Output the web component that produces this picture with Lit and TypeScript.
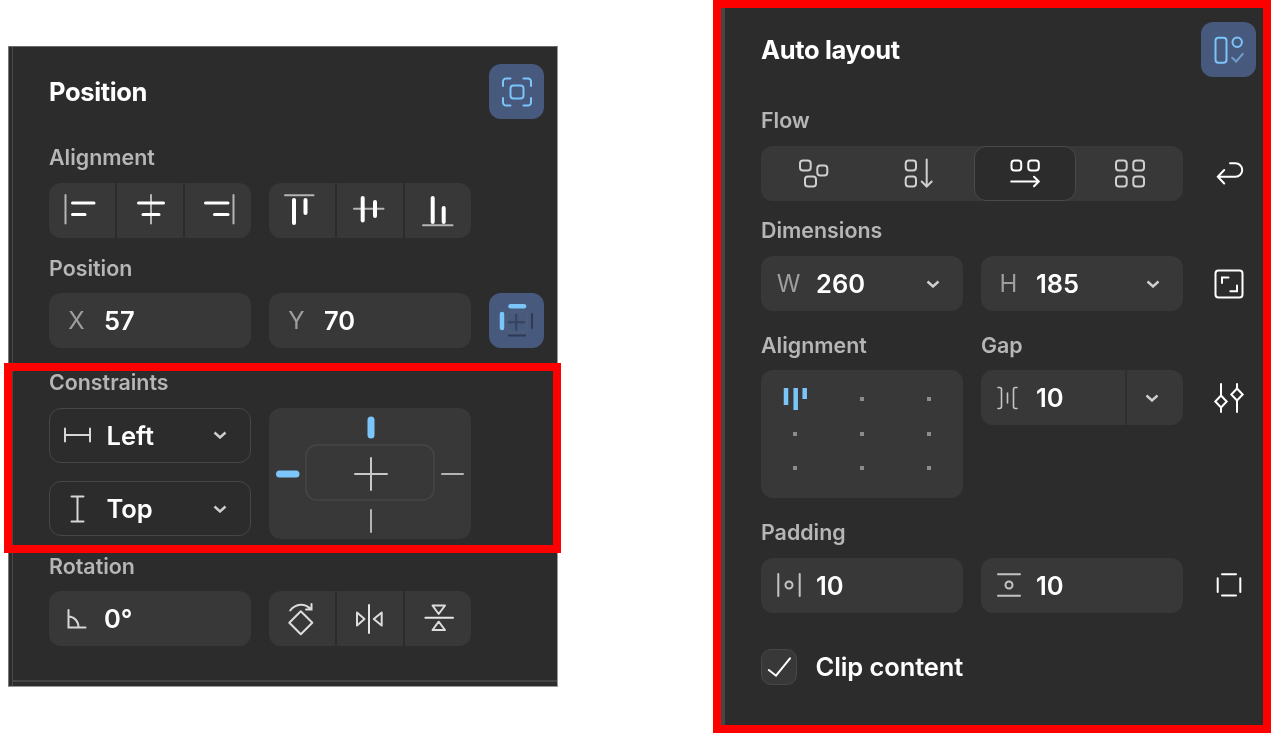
import { LitElement, html, css, svg } from 'lit';
import { customElement } from 'lit/decorators.js';

const BLUE = '#7cc5fa';
const GRAY = '#b4b4b4';

// every icon is drawn around 0,0 so it stays centered in its cell
const ic = (body: unknown) => html`<svg class="ic" viewBox="-20 -20 40 40">${body}</svg>`;

const line = (d: string, w = 2, c = GRAY) => svg`<path d=${d} stroke=${c} stroke-width=${w}></path>`;
const box = (x: number, y: number, w: number, h: number, c = '#cfcfcf', r = 3) =>
  svg`<rect x=${x} y=${y} width=${w} height=${h} rx=${r} stroke=${c}></rect>`;

const icons = {
  alignLeft: ic(svg`${line('M-16.5 -15V13.5')}${line('M-9.5 -7H12', 3, '#fff')}${line('M-9.5 4.5H3', 3, '#fff')}`),
  alignCenter: ic(svg`${line('M1 -15V13.5')}${line('M-11.5 -7H13.5', 3, '#fff')}${line('M-7 4.5H9', 3, '#fff')}`),
  alignRight: ic(svg`${line('M15.5 -15V13.5')}${line('M-12.5 -7H10', 3, '#fff')}${line('M-3.5 4.5H10', 3, '#fff')}`),
  alignTop: ic(svg`${line('M-17 -14.8H11.5')}${line('M-8 -10V13', 4, '#fff')}${line('M3.5 -10V3', 4, '#fff')}`),
  alignMiddle: ic(svg`${line('M-16 -1.2H13.5')}${line('M-7.3 -12V10.5', 4, '#fff')}${line('M5 -8V6', 4, '#fff')}`),
  alignBottom: ic(svg`${line('M-15 15.2H14.5')}${line('M-5.3 -12V12', 4, '#fff')}${line('M5.7 -2V12', 4, '#fff')}`),
  focus: ic(svg`
    ${line('M-14 -6V-10.5A3 3 0 0 1 -11 -13.5H-6.5', 2, BLUE)}
    ${line('M6.5 -13.5H11A3 3 0 0 1 14 -10.5V-6', 2, BLUE)}
    ${line('M14 6V10.5A3 3 0 0 1 11 13.5H6.5', 2, BLUE)}
    ${line('M-6.5 13.5H-11A3 3 0 0 1 -14 10.5V6', 2, BLUE)}
    ${box(-6.5, -6.5, 13, 13, BLUE)}`),
  constraintMini: ic(svg`
    ${box(-10, -9, 20, 20, '#4d5c7b')}
    ${line('M-0.8 -6.5V9M-8.5 1.2H7', 2, '#36425c')}
    ${line('M-6.5 -14.8H7', 4.5, BLUE)}
    ${line('M-15 -7V7', 4.5, BLUE)}
    ${line('M15 -7V7', 2, '#2f3a52')}
    ${line('M-8 14.5H8', 2, '#2f3a52')}`),
  hConstraint: ic(svg`${line('M-11 -6.5V6.5M14 -6.5V6.5M-11 0H14', 2, '#d6d6d6')}`),
  vConstraint: ic(svg`${line('M-4.5 -12.5H7.5M-4.5 12.5H7.5M1.5 -12.5V12.5', 2, '#d6d6d6')}`),
  angle: ic(svg`${line('M-8.5 -9V8.5H8.5M-8.5 -2.5C-2.5 -2.5 1.5 2.5 1.5 8.5', 2, '#d6d6d6')}`),
  rotate: ic(svg`
    <path d="M-1.2 -7.7L10.3 3.8L-1.2 15.3L-12.7 3.8Z" stroke="#dcdcdc" stroke-linejoin="round"></path>
    ${line('M-11.8 -8.5C-6 -16 3 -16 9 -9.5M9.5 -15V-9.5H4', 2, '#dcdcdc')}`),
  flipH: ic(svg`${line('M-1 -14V14', 2, '#e6e6e6')}
    <path d="M-13 -6.5L-5.5 0L-13 6.5Z" stroke="#dcdcdc" stroke-linejoin="round"></path>
    <path d="M11.7 -6.5L3.8 0L11.7 6.5Z" stroke="#dcdcdc" stroke-linejoin="round"></path>`),
  flipV: ic(svg`${line('M-12.6 -1.2H15', 2, '#e6e6e6')}
    <path d="M-5.5 -13.5H7L0.7 -5Z" stroke="#dcdcdc" stroke-linejoin="round"></path>
    <path d="M-5.5 11H7L0.7 2.7Z" stroke="#dcdcdc" stroke-linejoin="round"></path>`),
  autoLayout: ic(svg`
    ${box(-13.5, -12.2, 11, 25, BLUE, 3)}
    <circle cx="8.2" cy="-7.8" r="4.7" stroke=${BLUE}></circle>
    ${line('M3.2 7.8L7.2 11.5L13.8 3.8', 2, '#6f9fcc')}`),
  flowFree: ic(svg`${box(-14, -12.5, 10.7, 10)}${box(3.3, -7.5, 10, 10)}${box(-9, 3.5, 11, 10)}`),
  flowVertical: ic(svg`${box(-13.3, -12.5, 10.3, 10)}${box(-13.3, 3.5, 10.3, 10)}
    ${line('M7.7 -13.5V13.5M2.7 8.5L7.7 13.5L12.7 8.5', 2, '#cfcfcf')}`),
  flowHorizontal: ic(svg`${box(-13.5, -12.5, 9.7, 10, '#fff')}${box(3.3, -12.5, 10.5, 10, '#fff')}
    ${line('M-13.8 8.5H13.8M9 3.8L13.8 8.5L9 13.2', 2, '#fff')}`),
  flowGrid: ic(svg`${box(-14, -12.5, 10.7, 10)}${box(3.3, -12.5, 10.7, 10)}${box(-14, 3.5, 10.7, 10)}${box(3.3, 3.5, 10.7, 10)}`),
  wrap: ic(svg`${line('M1 -9.7H6.5A6.7 6.7 0 0 1 6.5 3.7H-11.2M-4.8 -3L-11.2 3.7L-4.8 10.5', 2, '#fff')}`),
  size: ic(svg`${box(-13.5, -13.5, 27, 27, '#fff', 3)}${line('M-7 -1V-6.5H-0.5M8 1.5V7.2H1.3', 2, '#fff')}`),
  gap: ic(svg`${line('M-11 -10.5H-9.5Q-7.5 -10.5 -7.5 -8.5V8.5Q-7.5 10.5 -9.5 10.5H-11', 1.6, '#c4c4c4')}
    ${line('M8 -10.5H6.5Q4.5 -10.5 4.5 -8.5V8.5Q4.5 10.5 6.5 10.5H8', 1.6, '#c4c4c4')}${line('M-1.5 -5V5', 1.6, '#c4c4c4')}`),
  sliders: ic(svg`
    ${line('M-8 -14V-2.5M-8 9.5V14M8 -14V-9.5M8 2.5V14', 2, '#fff')}
    <path d="M-8 -2.5L-2.3 3.5L-8 9.5L-13.7 3.5Z" stroke="#fff"></path>
    <path d="M8 -9.5L13.7 -3.5L8 2.5L2.3 -3.5Z" stroke="#fff"></path>`),
  padH: ic(svg`${line('M-10.7 -11V11M10.7 -11V11', 2, '#c4c4c4')}<circle r="3.5" stroke="#c4c4c4"></circle>`),
  padV: ic(svg`${line('M-11 -10.7H11M-11 10.7H11', 2, '#c4c4c4')}<circle r="3.5" stroke="#c4c4c4"></circle>`),
  padAll: ic(svg`${line('M-7 -10.7H7M-7 10.5H7M-11.3 -6.7V7M11.3 -6.7V7', 2, '#fff')}`),
  check: ic(svg`${line('M-10.2 3L-3 8.7L11 -8.7', 2, '#fff')}`),
};

const chevron = html`<svg class="chev" viewBox="0 0 14 8"><path d="M1.5 1.5L7 6.5L12.5 1.5"></path></svg>`;

@customElement('app-root')
export class AppRoot extends LitElement {
  field(prefix: unknown, value: string, chev = false) {
    return html`
      <div class="field">
        <span class="prefix">${prefix}</span>
        <span class="value">${value}</span>
        ${chev ? chevron : ''}
      </div>
    `;
  }

  dropdown(icon: unknown, value: string) {
    return html`
      <div class="field outline">
        <span class="prefix">${icon}</span>
        <span class="value drop">${value}</span>
        ${chevron}
      </div>
    `;
  }

  seg(items: unknown[]) {
    return html`<div class="seg">${items.map((i) => html`<div class="cell">${i}</div>`)}</div>`;
  }

  renderPosition() {
    return html`
      <section class="panel position">
        <div class="head">
          <h2>Position</h2>
          <button class="tool">${icons.focus}</button>
        </div>
        <div class="label m-align">Alignment</div>
        <div class="row">
          ${this.seg([icons.alignLeft, icons.alignCenter, icons.alignRight])}
          ${this.seg([icons.alignTop, icons.alignMiddle, icons.alignBottom])}
        </div>
        <div class="label m16">Position</div>
        <div class="row">
          ${this.field('X', '57')}
          ${this.field('Y', '70')}
          <button class="tool">${icons.constraintMini}</button>
        </div>
        <div class="label m20">Constraints</div>
        <div class="row">
          <div class="stack">
            ${this.dropdown(icons.hConstraint, 'Left')}
            ${this.dropdown(icons.vConstraint, 'Top')}
          </div>
          <div class="constraint-box">
            <svg viewBox="0 0 202 131">
              <rect x="37" y="37" width="128" height="55" rx="11" stroke="#464646" stroke-width="1.5"></rect>
              <path d="M102 50V82M86 66H118" stroke="#c8c8c8" stroke-width="2"></path>
              <path d="M102 12V27" stroke=${BLUE} stroke-width="7"></path>
              <path d="M10.5 66H27" stroke=${BLUE} stroke-width="7"></path>
              <path d="M173 66H194" stroke="#b4b4b4" stroke-width="2"></path>
              <path d="M102 102V124" stroke="#b4b4b4" stroke-width="2"></path>
            </svg>
          </div>
        </div>
        <div class="label m13">Rotation</div>
        <div class="row">
          ${this.field(icons.angle, '0°')}
          ${this.seg([icons.rotate, icons.flipH, icons.flipV])}
        </div>
        <div class="red-frame"></div>
      </section>
    `;
  }

  renderAutoLayout() {
    const dots = Array.from({ length: 8 });
    return html`
      <section class="panel auto">
        <div class="head">
          <h2>Auto layout</h2>
          <button class="tool">${icons.autoLayout}</button>
        </div>
        <div class="label m29">Flow</div>
        <div class="row">
          <div class="seg flow span2">
            <div class="cell">${icons.flowFree}</div>
            <div class="cell">${icons.flowVertical}</div>
            <div class="cell selected">${icons.flowHorizontal}</div>
            <div class="cell">${icons.flowGrid}</div>
          </div>
          <div class="side">${icons.wrap}</div>
        </div>
        <div class="label dim">Dimensions</div>
        <div class="row">
          ${this.field('W', '260', true)}
          ${this.field('H', '185', true)}
          <div class="side">${icons.size}</div>
        </div>
        <div class="row labels">
          <div class="label">Alignment</div>
          <div class="label">Gap</div>
        </div>
        <div class="row top">
          <div class="align-grid">
            <div class="spot">
              <svg class="ic" viewBox="-20 -20 40 40">
                <path d="M-9 -11V6M0.7 -11V11M9.7 -11V0" stroke=${BLUE} stroke-width="4.5" stroke-linecap="butt"></path>
              </svg>
            </div>
            ${dots.map(() => html`<div class="spot"><i></i></div>`)}
          </div>
          <div class="field split">
            <span class="prefix">${icons.gap}</span>
            <span class="value">10</span>
            <span class="split-end">${chevron}</span>
          </div>
          <div class="side">${icons.sliders}</div>
        </div>
        <div class="label m20">Padding</div>
        <div class="row">
          ${this.field(icons.padH, '10')}
          ${this.field(icons.padV, '10')}
          <div class="side">${icons.padAll}</div>
        </div>
        <label class="clip">
          <span class="checkbox">${icons.check}</span>
          Clip content
        </label>
      </section>
    `;
  }

  render() {
    return html`<div class="page">${this.renderPosition()}${this.renderAutoLayout()}</div>`;
  }

  static styles = css`
    :host {
      display: block;
      background: #fff;
      font-family: Inter, 'Liberation Sans', sans-serif;
    }

    .page {
      display: flex;
      align-items: flex-start;
      height: 733px;
      overflow: hidden;
    }

    .panel {
      box-sizing: border-box;
      background: #2c2c2c;
      color: #fff;
      display: flex;
      flex-direction: column;
    }

    .panel > *:not(.red-frame) {
      filter: blur(0.5px);
    }

    .position {
      position: relative;
      width: 550px;
      height: 641px;
      margin: 46px 0 0 8px;
      padding: 17px 0 0 40px;
      border-top: 1px solid #6a6a6a;
      border-left: 1px solid #777;
      box-shadow: inset 3px 0 0 #2c2c2c, inset 4px 0 0 #484848, inset 0 -4px 0 #2c2c2c, inset 0 -6px 0 #444;
      border-bottom: 1px solid #999;
      border-right: 1px solid #999;
    }

    .auto {
      width: 558px;
      height: 733px;
      margin-left: 155px;
      border: 8px solid #f00;
      padding: 14px 0 0 40px;
      box-shadow: inset 4px 0 0 #464646;
    }

    .red-frame {
      position: absolute;
      left: -5px;
      right: -4px;
      top: 316px;
      height: 190px;
      box-sizing: border-box;
      border: 8px solid #f00;
      pointer-events: none;
    }

    .head {
      display: grid;
      grid-template-columns: 440px 55px;
      align-items: center;
    }

    h2 {
      margin: 0;
      font-size: 25.5px;
      font-weight: 700;
      line-height: 55px;
      letter-spacing: -0.35px;
    }

    .label {
      height: 28px;
      line-height: 28px;
      margin-bottom: 11.5px;
      font-size: 21.4px;
      font-weight: 600;
      color: #b6b6b6;
    }

    .m-align { margin-top: 24px; }
    .m13 { margin-top: 13px; }
    .m16 { margin-top: 16px; }
    .m20 { margin-top: 20px; }
    .m29 { margin-top: 29px; }

    .label.dim {
      margin-top: 15px;
      margin-bottom: 12.5px;
    }

    .row {
      display: grid;
      grid-template-columns: 202px 202px 55px;
      column-gap: 18px;
    }

    .row.top {
      align-items: start;
    }

    .labels {
      margin-top: 19.5px;
    }

    .labels .label {
      margin-bottom: 11.5px;
    }

    .span2 {
      grid-column: span 2;
    }

    .side {
      display: flex;
      align-items: center;
      justify-content: center;
      height: 55px;
    }

    button.tool {
      width: 55px;
      height: 55px;
      padding: 0;
      border: none;
      border-radius: 12px;
      background: #47597d;
      display: flex;
      align-items: center;
      justify-content: center;
    }

    .ic {
      width: 40px;
      height: 40px;
      display: block;
      fill: none;
      stroke-width: 2;
      stroke-linecap: round;
      overflow: visible;
    }

    .seg {
      display: flex;
      gap: 2px;
      height: 55px;
      border-radius: 12px;
      overflow: hidden;
    }

    .cell {
      flex: 1;
      background: #383838;
      display: flex;
      align-items: center;
      justify-content: center;
    }

    .seg.flow {
      gap: 0;
      background: #383838;
      padding: 0;
    }

    .cell.selected {
      flex: none;
      width: 102px;
      margin: 0 2px;
      box-sizing: border-box;
      background: #2c2c2c;
      border: 1.5px solid #4a4a4a;
      border-radius: 12px;
    }

    .field {
      box-sizing: border-box;
      height: 55px;
      background: #383838;
      border-radius: 12px;
      display: flex;
      align-items: center;
      font-size: 25.5px;
    }

    .field.outline {
      background: transparent;
      border: 1.5px solid #474747;
    }

    .prefix {
      flex: none;
      width: 55px;
      display: flex;
      justify-content: center;
      font-size: 24px;
      color: #9e9e9e;
      font-weight: 400;
    }

    .outline .prefix {
      margin-left: -1.5px;
    }

    .value {
      font-weight: 600;
      color: #fff;
    }

    .drop {
      margin-left: 3px;
    }

    .chev {
      width: 14px;
      height: 8px;
      margin-left: auto;
      margin-right: 23px;
      fill: none;
      stroke: #cfcfcf;
      stroke-width: 2.4;
    }

    .stack {
      display: grid;
      row-gap: 18.5px;
      align-content: start;
    }

    .constraint-box {
      height: 131px;
      background: #383838;
      border-radius: 12px;
    }

    .constraint-box svg {
      display: block;
      width: 202px;
      height: 131px;
      fill: none;
      stroke-linecap: round;
    }

    .align-grid {
      box-sizing: border-box;
      height: 128px;
      padding: 12px 0;
      background: #383838;
      border-radius: 12px;
      display: grid;
      grid-template-columns: repeat(3, 67px);
      grid-auto-rows: 34.5px;
    }

    .spot {
      display: flex;
      align-items: center;
      justify-content: center;
    }

    .spot .ic {
      flex: none;
    }

    .spot i {
      width: 4px;
      height: 4px;
      background: #8c8c8c;
    }

    .field.split .split-end {
      margin-left: auto;
      align-self: stretch;
      width: 58px;
      box-sizing: border-box;
      padding-right: 6px;
      border-left: 2.5px solid #2f2f2f;
      display: flex;
      align-items: center;
    }

    .split-end .chev {
      margin: 0 auto;
    }

    .clip {
      display: flex;
      align-items: center;
      gap: 18.5px;
      margin-top: 36px;
      font-size: 25.5px;
      font-weight: 600;
      letter-spacing: -0.1px;
    }

    .checkbox {
      box-sizing: border-box;
      width: 36px;
      height: 36px;
      background: #383838;
      border: 1.5px solid #474747;
      border-radius: 10px;
      display: flex;
      align-items: center;
      justify-content: center;
    }
  `;
}

declare global {
  interface HTMLElementTagNameMap {
    'app-root': AppRoot;
  }
}
